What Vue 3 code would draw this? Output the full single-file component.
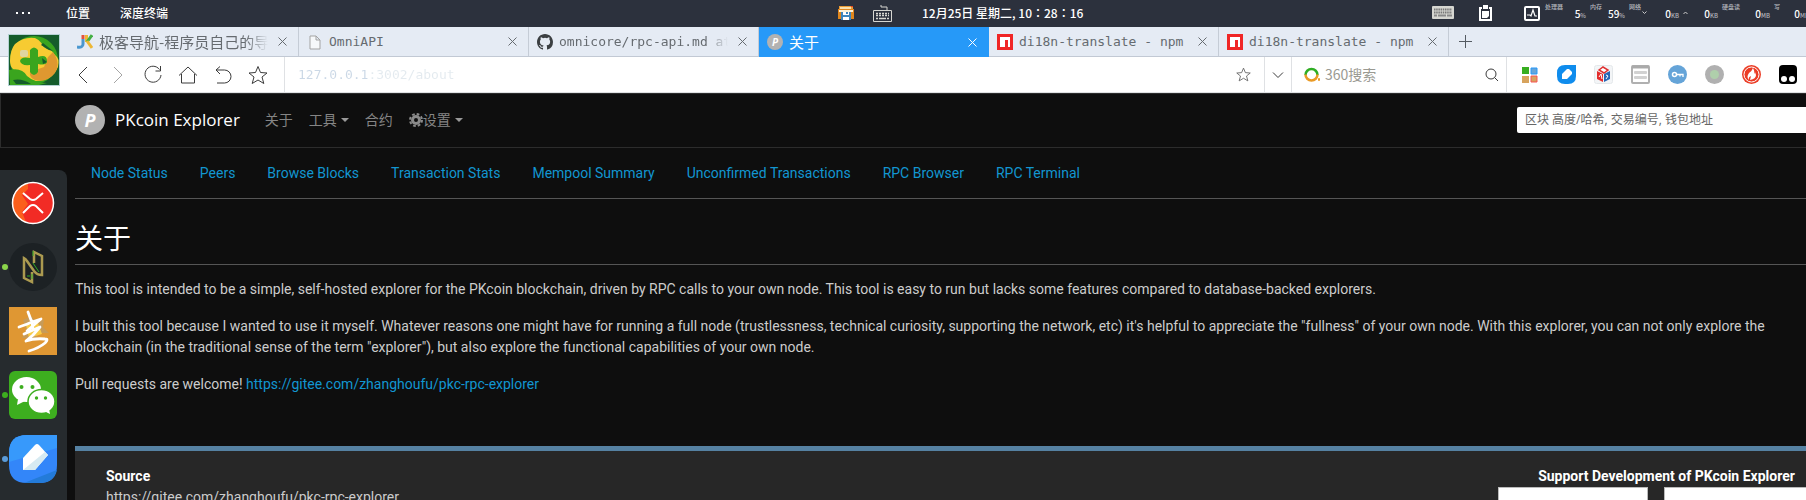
<script setup>
const stats = [
  { label: '处理器', value: '5', unit: '%', size: 's41' },
  { label: '内存', value: '59', unit: '%', size: 's35' },
  { label: '网络', value: '0', unit: 'KB', size: 's50', arrow: 'down' },
  { label: '', value: '0', unit: 'KB', size: 's35', arrow: 'up' },
  { label: '硬盘读', value: '0', unit: 'MB', size: 's48' },
  { label: '写', value: '0', unit: 'MB', size: 's35' },
]
const tabs = [
  { title: '极客导航-程序员自己的导', icon: 'jk', fade: true, cjk: true },
  { title: 'OmniAPI', icon: 'page' },
  { title: 'omnicore/rpc-api.md at', icon: 'github', fade: true },
  { title: '关于', icon: 'coin', active: true, cjk: true },
  { title: 'di18n-translate - npm', icon: 'npm' },
  { title: 'di18n-translate - npm', icon: 'npm' },
]
const subnav = ['Node Status', 'Peers', 'Browse Blocks', 'Transaction Stats', 'Mempool Summary', 'Unconfirmed Transactions', 'RPC Browser', 'RPC Terminal']
</script>

<template>
  <div class="desktop">
    <header class="sysbar">
      <div class="sys-left">
        <button class="dots" aria-label="菜单"><i></i><i></i><i></i></button>
        <button>位置</button>
        <button>深度终端</button>
      </div>
      <div class="sys-mid">
        <svg width="16" height="15" viewBox="0 0 16 15">
          <path d="M1 0h14v3H1z" fill="#e99b35" /><path d="M0 3h16v10H0z" fill="#e0861d" />
          <path d="M2 1h11v2H2z" fill="#f7dfae" /><path d="M13 0h2v1h-2z" fill="#e8402a" />
          <path d="M1 4h14v2H1z" fill="#fff1d5" /><path d="M3 6h10v8H3z" fill="#3f86bd" /><path d="M5 6h6v3H5zM5 11h6v3H5z" fill="#fff" /><path d="M8 6h2v2H8z" fill="#3f86bd" />
        </svg>
        <svg width="19" height="19" viewBox="0 0 19 19" fill="none" stroke="#d7d7d2">
          <path d="M8 1v2h6v3M.5 6.500h18v11H.5z" />
          <path d="M3 9.500h13M3 11.500h13" stroke-width="1.500" stroke-dasharray="2 1" /><path d="M3 14.500h2m1 0h7m1 0h2" stroke-width="1.500" />
        </svg>
        <time>12月25日 星期二, 10：28：16</time>
      </div>
      <div class="sys-right">
        <svg width="22" height="14" viewBox="0 0 22 14">
          <rect width="22" height="13" rx="1" fill="#d6d6d1" /><path d="M2 3.500h18M2 6.500h18" stroke="#777" stroke-width="2" stroke-dasharray="1.500 .7" /><path d="M2 9.500h3m1 0h8m1 0h5" stroke="#888" stroke-width="2" />
        </svg>
        <svg class="clip" width="13" height="16" viewBox="0 0 13 16">
          <path d="M0 2h13v14H0z" fill="#fff" /><path d="M2 4h9v10H2z" fill="#2c313d" /><path d="M4 0h5v4H4zM3 6h7v5l-2 2H3z" fill="#fff" /><path d="M3 2h1v2h5V2h1v3H3z" fill="#2c313d" />
        </svg>
        <svg class="pulse" width="16" height="15" viewBox="0 0 16 15" fill="none" stroke="#fff">
          <rect x="1" y="1" width="14" height="13" rx="1" stroke-width="2" /><path d="M3 9h3l1 1 2-6 2 6h2" stroke-width="1.200" />
        </svg>
        <div class="stats">
          <span v-for="(s, i) in stats" :key="i" class="stat" :class="s.size">
            <small v-if="s.label" class="lab">{{ s.label }}</small>
            <svg v-if="s.arrow" class="arr" width="5" height="4" viewBox="0 0 5 4" fill="none" stroke="#ccc"><path :d="s.arrow === 'down' ? 'M.5 .5l2 2 2-2' : 'M.5 3l2-2 2 2'" /></svg>
            <span class="val"><b>{{ s.value }}</b><small>{{ s.unit }}</small></span>
          </span>
        </div>
      </div>
    </header>

    <div class="browser">
      <svg class="avatar" width="52" height="52" viewBox="0 0 52 52">
        <rect width="52" height="52" fill="#b5d2d4" /><rect x="1" y="1" width="50" height="50" fill="#155c2b" />
        <circle cx="26" cy="26" r="24" fill="#3aa51e" />
        <path d="M7 10Q18 1 31 5q10 8 16 16 5 3 3 12-6 14-22 14-10-1-14-8Q2 37 2 27q0-11 5-17z" fill="#f7cb32" />
        <path d="M45 18q8 11 2 21-8 10-20 7-6-3-5-8l14-5 4-10z" fill="#df9830" />
        <path d="M24 3q15 0 23 13-8 1-12-4Q32 5 24 3z" fill="#3aa51e" /><path d="M1 36q13-3 18 6 8 7 20 7l-8 2H2z" fill="#3aa51e" />
        <path d="M5 46q9-2 18 4H8z" fill="#155c2b" /><path d="M35 9l10 8-4-1-8-5z" fill="#155c2b" />
        <rect x="12" y="16" width="8" height="7" rx="2" fill="#dfd5a0" />
        <path d="M22 16q4-5 8 0v7q9-3 9 4 0 5-9 3v8q-4 6-8 0v-7q-9 1-10-4 1-5 10-3z" fill="#3aa51e" /><path d="M34 24l5 4-4 2z" fill="#155c2b" />
      </svg>
      <nav class="tabs" aria-label="标签页">
        <div v-for="(t, i) in tabs" :key="i" class="tab" :class="{ active: t.active }">
          <svg v-if="t.icon === 'jk'" width="16" height="16" viewBox="0 0 16 16" fill="none" stroke-width="3">
            <path d="M6 1v4" stroke="#e4523c" /><path d="M6 5v5q0 4-6 3" stroke="#4a97cf" /><path d="M9.500 1v7" stroke="#edb735" /><path d="M15 1l-5 7" stroke="#43af43" /><path d="M10 7l5 7" stroke="#edb735" />
          </svg>
          <svg v-else-if="t.icon === 'page'" width="16" height="16" viewBox="0 0 16 16" fill="#f6f8fa" stroke="#a3a3a3">
            <path d="M3 2h6l4 4v9H3zM9 2v4h4" />
          </svg>
          <svg v-else-if="t.icon === 'github'" width="16" height="16" viewBox="0 0 16 16">
            <path fill="#3b3f42" d="M8 0C3.580 0 0 3.580 0 8c0 3.540 2.290 6.530 5.470 7.590.4.070.55-.17.55-.38v-1.490c-2.010.37-2.690-.49-2.690-.94-.09-.23-.48-.94-.82-1.130-.28-.15-.68-.52-.01-.53.63-.01 1.080.58 1.230.82.72 1.210 1.870.87 2.330.66.07-.52.28-.87.51-1.070-1.780-.2-3.640-.89-3.640-3.950 0-.87.31-1.590.82-2.150-.08-.2-.36-1.020.08-2.120 0 0 .67-.21 2.200.82a7.400 7.400 0 0 1 4 0c1.530-1.040 2.200-.82 2.200-.82.44 1.100.16 1.920.08 2.120.51.56.82 1.270.82 2.150 0 3.070-1.870 3.750-3.650 3.950.29.25.54.73.54 1.480v2.200c0 .21.15.46.55.38A8 8 0 0 0 16 8c0-4.420-3.580-8-8-8z" />
          </svg>
          <span v-else-if="t.icon === 'coin'" class="coin small">P</span>
          <svg v-else width="16" height="16" viewBox="0 0 16 16">
            <path fill="#f02626" d="M0 0h16v16H0z" /><path fill="#fff" d="M3 3h10v10h-2V6H8v7H3z" />
          </svg>
          <a href="#" class="title" :class="{ fade: t.fade, cjk: t.cjk }">{{ t.title }}</a>
          <button class="close" aria-label="关闭"><svg width="9" height="9" viewBox="0 0 9 9" fill="none" stroke="currentColor"><path d="M.5 .5l8 8M8.500 .5l-8 8" /></svg></button>
        </div>
        <button class="plus" aria-label="新标签页"><svg width="13" height="13" viewBox="0 0 13 13" stroke="#555b62"><path d="M6.500 0v13M0 6.500h13" /></svg></button>
      </nav>

      <div class="toolbar">
        <div class="tools">
          <button aria-label="后退"><svg width="20" height="20" viewBox="0 0 20 20"><path d="M14 2L6 10l8 8" /></svg></button>
          <button aria-label="前进" class="dim"><svg width="20" height="20" viewBox="0 0 20 20"><path d="M6 2l8 8-8 8" /></svg></button>
          <button aria-label="刷新"><svg width="20" height="20" viewBox="0 0 20 20"><path d="M16.500 4.500A8 8 0 1 0 18 10M17.500 1v5h-5" /></svg></button>
          <button aria-label="主页"><svg width="20" height="20" viewBox="0 0 20 20"><path d="M1 10.500L10 2l9 8.500M3.500 9v9h13V9" /></svg></button>
          <button aria-label="撤销"><svg width="20" height="20" viewBox="0 0 20 20"><path d="M7 1.500L3 5l4 4M3 5h8.500a6.500 6.500 0 0 1 0 13H4" /></svg></button>
          <button aria-label="收藏"><svg width="20" height="20" viewBox="0 0 20 20"><path d="M10 1.500l2.500 6 6.500.5-5 4 1.800 6.500L10 15l-5.800 3.500L6 12 1 8l6.500-.5z" /></svg></button>
        </div>
        <div class="address">
          <input aria-label="地址" value="127.0.0.1:3002/about" />
          <button aria-label="收藏此页"><svg width="15" height="15" viewBox="0 0 20 20"><path stroke-width="1.200" stroke="#666" d="M10 1.500l2.500 6 6.500.5-5 4 1.800 6.500L10 15l-5.800 3.500L6 12 1 8l6.500-.5z" /></svg></button>
        </div>
        <button class="chev" aria-label="展开"><svg width="12" height="12" viewBox="0 0 12 12"><path d="M1 3.500l5 5 5-5" /></svg></button>
        <div class="find">
          <svg width="17" height="17" viewBox="0 0 17 17" fill="none" stroke-width="2.500"><path d="M1.500 9a6 6 0 1 1 12 0" stroke="#2fae24" /><path d="M1.500 8.500a6 6 0 0 0 12 0" stroke="#ea9a25" /><path d="M14 13.500h2" stroke="#ea9a25" /></svg>
          <input aria-label="360搜索" placeholder="360搜索" />
          <button aria-label="搜索"><svg width="14" height="14" viewBox="0 0 14 14"><circle cx="6" cy="6" r="5" /><path d="M9.500 9.500L13 13" /></svg></button>
        </div>
        <div class="exts">
          <button aria-label="应用"><svg width="16" height="16" viewBox="0 0 16 16"><path d="M0 0h7v7H0z" fill="#37ae20" /><path d="M9 1h6v6H9z" fill="#66a5d8" stroke="#2698f9" /><path d="M0 9h7v7H0z" fill="#d7a35d" /><path d="M9 9h6v6H9z" fill="#d7a35d" stroke="#f75454" /></svg></button>
          <button aria-label="笔记"><svg width="19" height="19" viewBox="0 0 19 19"><path d="M8 0h11v11q0 8-8 8H8q-8 0-8-8V8q0-8 8-8z" fill="#0f8ced" /><path d="M5 14V9l5-5h2l3 3v2l-5 5z" fill="#fff" /></svg></button>
          <button aria-label="翻译"><svg width="19" height="19" viewBox="0 0 19 19"><rect x=".5" y=".5" width="18" height="18" rx="2" fill="#f3f5f7" stroke="#e4e8ea" /><path d="M3 6l6 3v8l-6-3z" fill="#e42d2d" /><path d="M16 6l-6 3v8l6-3z" fill="#2767b5" /><path d="M5 5l4-3 5 3-4 3z" fill="#fff" stroke="#df3131" stroke-width="1.500" /><path d="M5 12l2-3 1 5M12 10l2 1-2 3" fill="none" stroke="#fff" /></svg></button>
          <button aria-label="阅读"><svg width="19" height="19" viewBox="0 0 19 19"><rect x="1" y="1" width="17" height="17" rx="1" fill="#fff" stroke="#b0b0b0" stroke-width="2" /><path d="M1 2h17" stroke="#aaa" stroke-width="3" /><rect x="3" y="6" width="13" height="3" rx="1" fill="#d2d2d2" /><rect x="3" y="11" width="13" height="3" rx="1" fill="#d2d2d2" /></svg></button>
          <button aria-label="密码"><svg width="19" height="19" viewBox="0 0 19 19"><circle cx="9.500" cy="9.500" r="9.500" fill="#65a4d8" /><circle cx="6.500" cy="9.500" r="2" fill="none" stroke="#fff" stroke-width="1.500" /><path d="M8.500 9.500H15V12m-3-2.500v2" fill="none" stroke="#fff" stroke-width="1.300" /></svg></button>
          <button aria-label="状态"><svg width="19" height="19" viewBox="0 0 19 19"><circle cx="9.500" cy="9.500" r="9.500" fill="#b0b0b0" /><circle cx="9.500" cy="9.500" r="4.500" fill="#afcfab" /></svg></button>
          <button aria-label="热门"><svg width="19" height="19" viewBox="0 0 19 19"><circle cx="9.500" cy="9.500" r="9.500" fill="#eb3c25" /><circle cx="9.500" cy="9.500" r="7.500" fill="none" stroke="#fff" /><path d="M11 3q-1 3-4 5-3 4 0 7-1-3 2-4l-1 4q6-1 6-5l-1-3-1 2q1-3-1-6z" fill="#fff" /></svg></button>
          <button aria-label="脚本"><svg width="19" height="19" viewBox="0 0 19 19"><rect width="18" height="19" rx="4" fill="#000" /><circle cx="5" cy="14" r="3" fill="#fff" /><circle cx="13" cy="14" r="3" fill="#fff" /></svg></button>
        </div>
      </div>
    </div>

    <div class="page">
      <header class="navbar">
        <a href="#" class="brand"><span class="coin">P</span>PKcoin Explorer</a>
        <a href="#">关于</a>
        <button class="drop">工具</button>
        <a href="#">合约</a>
        <button class="drop"><svg width="14" height="14" viewBox="0 0 14 14" fill="none" stroke="#8a8a8a"><circle cx="7" cy="7" r="3.500" stroke-width="3" /><circle cx="7" cy="7" r="6" stroke-width="2" stroke-dasharray="2.700 2.010" /></svg>设置</button>
        <input class="lookup" aria-label="区块搜索" placeholder="区块 高度/哈希, 交易编号, 钱包地址" />
      </header>
      <main>
        <nav class="subnav" aria-label="Explorer"><a v-for="n in subnav" :key="n" href="#">{{ n }}</a></nav>
        <h1>关于</h1>
        <p>This tool is intended to be a simple, self-hosted explorer for the PKcoin blockchain, driven by RPC calls to your own node. This tool is easy to run but lacks some features compared to database-backed explorers.</p>
        <p>I built this tool because I wanted to use it myself. Whatever reasons one might have for running a full node (trustlessness, technical curiosity, supporting the network, etc) it's helpful to appreciate the "fullness" of your own node. With this explorer, you can not only explore the<br />blockchain (in the traditional sense of the term "explorer"), but also explore the functional capabilities of your own node.</p>
        <p>Pull requests are welcome! <a href="#">https://gitee.com/zhanghoufu/pkc-rpc-explorer</a></p>
      </main>
      <footer>
        <div>
          <strong>Source</strong>
          <a href="#">https://gitee.com/zhanghoufu/pkc-rpc-explorer</a>
        </div>
        <div class="support">
          <strong>Support Development of PKcoin Explorer</strong>
          <div class="codes"><span></span><span></span></div>
        </div>
      </footer>
    </div>

    <aside class="dock">
      <button aria-label="XMind"><svg width="48" height="48" viewBox="0 0 48 48"><circle cx="24" cy="24" r="20.500" fill="#f22b25" /><path d="M19 4Q4 8 4 24t13 19l-4-10 6-8-6-9 6-6z" fill="#fb5f1c" /><circle cx="24" cy="24" r="20.500" fill="none" stroke="#fff" stroke-width="1.500" /><path d="M14 14l7 6q3 2 6 0l7-6M14 34l7-7q3-2 6 0l7 7" fill="none" stroke="#fff" stroke-width="2" /></svg></button>
      <button aria-label="Navicat" class="run lime"><svg width="48" height="48" viewBox="0 0 48 48"><circle cx="24" cy="24" r="24" fill="#1c2124" /><path d="M25 20V9l8 4v19q-5 0-8-4l-7-10q-1-2-3-3v20l8 4V29" fill="none" stroke="#ab9a50" stroke-width="2.500" /><path d="M24 8v5M24 20l6 9M18 33h3M23 31v5" fill="none" stroke="#2fab27" /></svg></button>
      <button aria-label="书法"><svg width="48" height="48" viewBox="0 0 48 48"><path d="M0 0h48v48H0z" fill="#df9733" /><path d="M14 13l8-4 7 7 6-4-1 8 6 6H30l-3 5H13l4-8z" fill="#c79b58" /><path d="M17 18l12-2 4 11-13 4z" fill="#f8cb46" /><path d="M19 5l3 8M10 20q9-3 13-5l9-3-6 5-8 7M23 14l1 9M15 27l16-7-7 8-7 6q8-3 19-2 4 0 0 4-6 5-16 8" fill="none" stroke="#fff" stroke-width="2.800" stroke-linecap="round" stroke-linejoin="round" /></svg></button>
      <button aria-label="微信" class="run green"><svg width="48" height="48" viewBox="0 0 48 48"><rect width="48" height="48" rx="6" fill="#3dae1f" /><path d="M9 28l-1 6 8-4z" fill="#fff" /><ellipse cx="17.500" cy="18.500" rx="14.500" ry="12.500" fill="#fff" /><ellipse cx="32.500" cy="30.500" rx="13.500" ry="12" fill="#fff" stroke="#3dae1f" stroke-width="1.500" /><path d="M35 40l6 3-1-5z" fill="#fff" /><g fill="#3dae1f"><circle cx="12.500" cy="16" r="2" /><circle cx="23.500" cy="16" r="2" /><circle cx="27.500" cy="27" r="1.700" /><circle cx="36.500" cy="27" r="1.700" /></g></svg></button>
      <button aria-label="笔记" class="run blue"><svg width="48" height="48" viewBox="0 0 48 48"><path d="M18 0h30v30q0 18-18 18H18Q0 48 0 30V18Q0 0 18 0z" fill="#3386f9" /><path d="M0 27V18Q0 0 18 0h30v13z" fill="#3799fb" /><path d="M15 48l33-13q-3 13-18 13z" fill="#237bd9" /><path d="M14 35V23L26 10q2-2 4 0l9 10-13 15z" fill="#fff" /><path d="M14 35l22-18 3 3-13 15z" fill="#d6eaf2" /></svg></button>
    </aside>
  </div>
</template>

<style>
body { margin: 0; background: #0e0e0e; }
</style>

<style scoped>
* { box-sizing: border-box; }
.desktop { position: relative; height: 100vh; overflow: hidden; background: #0e0e0e; color: #ccc; font: 14px/21px "Open Sans", "Noto Sans CJK SC", sans-serif; }
button, input { font: inherit; color: inherit; border: 0; background: none; padding: 0; margin: 0; }
input { outline: 0; min-width: 0; }
a { color: inherit; text-decoration: none; }
svg { display: block; flex: none; }

.sysbar { display: grid; grid-template-columns: 838fr 594fr 374fr; height: 27px; background: #2c313d; color: #fff; font: 500 12px/26px "Noto Sans CJK SC", sans-serif; overflow: hidden; }
.sysbar > div { display: flex; align-items: center; white-space: nowrap; height: 26px; min-width: 0; }
.sys-left { gap: 30px; padding-left: 16px; }
.dots { display: flex; gap: 4px; width: 20px; }
.dots i { width: 2px; height: 2px; background: #fff; }
.sys-mid svg + svg { margin-left: 19px; }
.sys-mid time { margin-left: 30px; font-family: "Noto Sans CJK TC", sans-serif; }
.clip { margin-left: 25px; }
.pulse { margin-left: 32px; }
.stats { display: flex; gap: 4px; margin-left: 5px; height: 26px; }
.stat { position: relative; flex: none; text-align: right; }
.s41 { width: 41px; } .s35 { width: 35px; } .s50 { width: 50px; } .s48 { width: 48px; }
.stat small { font-size: 6px; color: #b5b8be; }
.stat .lab { position: absolute; left: 0; top: 2px; line-height: 9px; }
.arr { position: absolute; left: 0; top: 11px; }
.s50 .arr { left: 13px; }
.val b { font-size: 10px; font-weight: 500; }

.browser { position: relative; background: #fff; }
.avatar { position: absolute; left: 8px; top: 7px; }
.tabs { display: flex; height: 30px; padding-left: 69px; background: #e5ebf4; border-bottom: 1px solid #c2c9d4; }
.tab { display: flex; align-items: center; width: 230px; padding: 0 11px 0 8px; border-right: 1px solid #c5ccd6; color: #666b70; font: 13px/31px "DejaVu Sans Mono", "Noto Sans CJK SC", monospace; }
.tab.active { background: #2699f8; color: #fff; border-color: #2699f8; height: 30px; }
.title { flex: 1; margin: 0 8px 0 6px; overflow: hidden; white-space: nowrap; }
.title.cjk { font: 15px/28px "Noto Sans CJK SC", sans-serif; }
.fade { mask-image: linear-gradient(90deg, #000 calc(100% - 24px), transparent calc(100% - 2px)); }
.close { display: flex; }
.plus { padding: 0 10px; }

.toolbar { display: flex; height: 36px; border-bottom: 1px solid #dfe1e3; }
.toolbar button { display: flex; align-items: center; justify-content: center; }
.tools { display: flex; padding: 0 9px 0 65px; border-right: 1px solid #dfe1e4; }
.tools button { width: 35px; }
.tools svg, .address svg, .chev svg, .find button svg { fill: none; stroke: #3b3b3b; }
.tools .dim svg { stroke: #a5a5a5; }
.address { display: flex; flex: 1; border-right: 1px solid #dfe1e4; padding-left: 13px; }
.address input { flex: 1; font: 13px/37px "DejaVu Sans Mono", monospace; color: transparent; background: linear-gradient(90deg, #cbd8e6 70px, #e3eaef 71px); background-clip: text; -webkit-background-clip: text; }
.address button { width: 42px; }
.chev { width: 26px; }
.find { display: flex; align-items: center; width: 216px; border: solid #dfe1e4; border-width: 0 1px; padding: 0 7px 0 12px; }
.find input { flex: 1; margin-left: 4px; font: 14px/35px "Noto Sans CJK SC", sans-serif; }
.find input::placeholder { color: #9a9a92; }
.exts { display: flex; width: 299px; padding-left: 4px; }
.exts button { width: 37px; flex: none; }

.page { width: calc(100% + 60px); white-space: nowrap; }
.navbar { display: flex; align-items: center; height: 55px; padding: 0 0 2px 74px; border: 1px solid #2c2c2c; color: #858585; }
.navbar > a, .drop { margin-right: 16px; }
.brand { display: flex; align-items: center; gap: 10px; color: #fff; font-size: 17px; }
.navbar > .brand { margin-right: 25px; }
.coin { display: flex; align-items: center; justify-content: center; width: 30px; height: 30px; flex: none; border-radius: 50%; background: #b2b2b2; color: #fff; font: italic bold 18px/30px "Open Sans", sans-serif; }
.coin.small { width: 16px; height: 16px; font-size: 10px; line-height: 16px; }
.drop { display: flex; align-items: center; }
.drop::after { content: ""; margin-left: 4px; border: 4px solid transparent; border-top-color: #999; border-bottom: 0; }
.lookup { width: 348px; height: 26px; margin-left: auto; padding: 0 8px; background: #fff; border-radius: 2px; font-size: 12px; }
.lookup::placeholder { color: #666; opacity: 1; }
main { padding-left: 75px; }
main, footer { font-family: Roboto, "Noto Sans CJK SC", sans-serif; }
.subnav { display: flex; padding: 7px 0 6px; border-bottom: 1px solid #555; color: #1296d1; }
.subnav a { padding: 8px 16px; }
h1 { margin: 24px 0 14px; padding-bottom: 8px; border-bottom: 1px solid #555; font-size: 28px; line-height: 33px; font-weight: 400; color: #fff; }
p { margin: 0 0 16px; }
p a { color: #1296d1; }
footer { display: flex; justify-content: space-between; margin: 51px 0 0 75px; padding: 15px 31px; border-top: 5px solid #5581a2; background: #272727; }
footer strong, footer a { display: block; }
footer strong { color: #fff; }
.support { width: 337px; text-align: center; }
.codes { display: flex; gap: 16px; }
.codes span { width: 150px; height: 150px; flex: none; background: #fff; border: 1px solid #bbb; }
.codes span + span { width: 171px; }

.dock { position: absolute; left: 0; top: 170px; bottom: 0; width: 67px; padding-top: 1px; background: #262b2e; border-radius: 0 8px 0 0; overflow: hidden; }
.dock button { position: relative; display: flex; align-items: center; width: 100%; height: 64px; padding-left: 9px; }
.run::before { content: ""; position: absolute; left: 2px; top: 29px; width: 6px; height: 6px; border-radius: 50%; }
.lime::before { background: #8bd54b; }
.green::before { background: #3dae1f; }
.blue::before { background: #5b9bd8; }
</style>
